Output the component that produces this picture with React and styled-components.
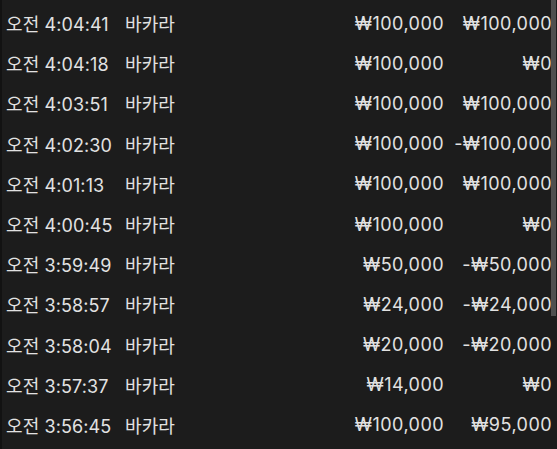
import React from "react";
import styled, { createGlobalStyle } from "styled-components";

const Global = createGlobalStyle`
  html, body { margin: 0; padding: 0; background: #1c1c1c; }
  body { width: 557px; height: 449px; overflow: hidden; }
`;

const Panel = styled.div`
  position: relative;
  width: 557px;
  height: 449px;
  box-sizing: border-box;
  background: #1c1c1c;
  border-left: 2px solid #121212;
  overflow: hidden;
  font-family: Inter, "Noto Sans CJK KR", sans-serif;
  font-size: 18px;
  color: #e2e2e2;
`;

const List = styled.div`
  display: flex;
  flex-direction: column;
  padding-top: 3px;
`;

const Row = styled.div`
  display: grid;
  grid-template-columns: 119px 1fr 110px 108px;
  align-items: center;
  height: 40.2px;
  padding-left: 4px;
  padding-right: 5px;
`;

const Cell = styled.span`
  white-space: nowrap;
  letter-spacing: ${(p) => (p.$right ? "0.45px" : "0.1px")};
  text-align: ${(p) => (p.$right ? "right" : "left")};
`;

const Thumb = styled.div`
  position: absolute;
  top: 0;
  right: 1px;
  width: 5px;
  height: 316px;
  background: #4f4f4f;
`;

const rows = [
  ["오전 4:04:41", "₩100,000", "₩100,000"],
  ["오전 4:04:18", "₩100,000", "₩0"],
  ["오전 4:03:51", "₩100,000", "₩100,000"],
  ["오전 4:02:30", "₩100,000", "-₩100,000"],
  ["오전 4:01:13", "₩100,000", "₩100,000"],
  ["오전 4:00:45", "₩100,000", "₩0"],
  ["오전 3:59:49", "₩50,000", "-₩50,000"],
  ["오전 3:58:57", "₩24,000", "-₩24,000"],
  ["오전 3:58:04", "₩20,000", "-₩20,000"],
  ["오전 3:57:37", "₩14,000", "₩0"],
  ["오전 3:56:45", "₩100,000", "₩95,000"],
];

export default function App() {
  return (
    <>
      <Global />
      <Panel>
        <List>
          {rows.map(([t, bet, res]) => (
            <Row key={t}>
              <Cell>{t}</Cell>
              <Cell>바카라</Cell>
              <Cell $right>{bet}</Cell>
              <Cell $right>{res}</Cell>
            </Row>
          ))}
        </List>
        <Thumb />
      </Panel>
    </>
  );
}
